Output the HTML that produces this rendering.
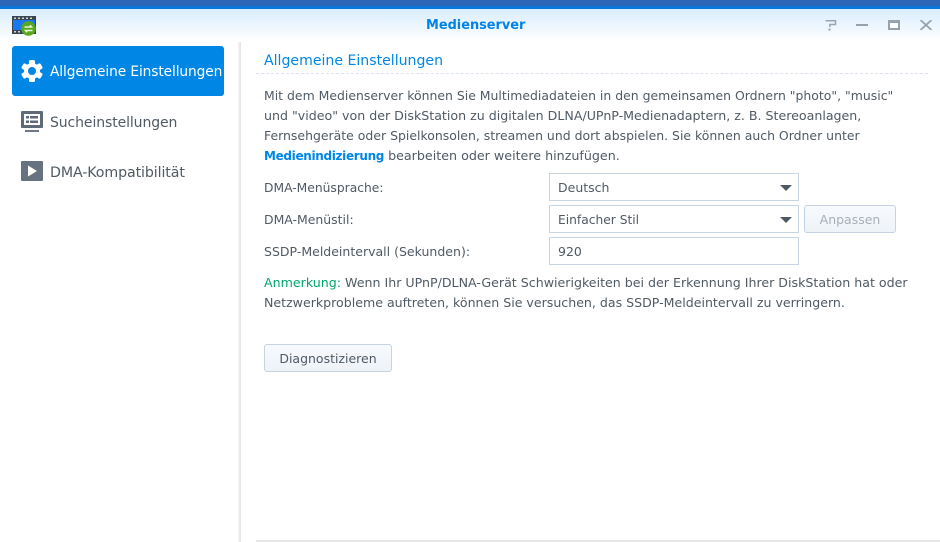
<!DOCTYPE html>
<html><head><meta charset="utf-8">
<style>
html,body{margin:0;padding:0;width:940px;height:542px;overflow:hidden;background:#fff}
body{position:relative;font-family:"DejaVu Sans","Liberation Sans",sans-serif;font-size:12.5px;color:#505a64}
.a{position:absolute;white-space:nowrap}
.t{line-height:20px;height:20px}
.box{position:absolute;box-sizing:border-box;background:#fff;border:1px solid #c7d4e2;height:28px;width:250px;left:549px}
.box span{position:absolute;left:8px;top:4px;line-height:20px;white-space:nowrap}
.arrow{position:absolute;left:230px;top:11px;width:0;height:0;border-left:6px solid transparent;border-right:6px solid transparent;border-top:6px solid #4f5965}
.btn{position:absolute;box-sizing:border-box;border:1px solid #c5d3e2;border-radius:3px;background:linear-gradient(#f7fafd,#eef3f8);text-align:center;line-height:28px;height:28px}
</style></head><body>
<div class="a" style="left:0;top:0;width:940px;height:6px;background:#2d68b8"></div>
<div class="a" style="left:0;top:6px;width:940px;height:3px;background:#0a78dc"></div>
<div class="a" style="left:0;top:9px;width:940px;height:33px;background:linear-gradient(#d9edfd,#ffffff)"></div>
<div class="a" style="left:426px;top:16px;line-height:20px;font-weight:bold;font-size:12.9px;color:#0083e6;">Medienserver</div>

<svg class="a" style="left:12px;top:16px" width="25" height="20" viewBox="0 0 25 20">
<rect x="0" y="0" width="24" height="18" fill="#3c4650"/>
<rect x="1" y="4" width="22" height="10" fill="#1a78f0"/>
<g fill="#cfd6dc"><rect x="2" y="1.500" width="2" height="1.500"/><rect x="6" y="1.500" width="2" height="1.500"/><rect x="10" y="1.500" width="2" height="1.500"/><rect x="14" y="1.500" width="2" height="1.500"/><rect x="18" y="1.500" width="2" height="1.500"/><rect x="2" y="15" width="2" height="1.500"/><rect x="6" y="15" width="2" height="1.500"/></g>
<circle cx="16.500" cy="12.500" r="7.300" fill="#5aa81e"/>
<path d="M12.500 11h7l-1.500-1.800M20.500 14.500h-7l1.500 1.800" fill="none" stroke="#e6f5d8" stroke-width="1.500"/>
</svg>

<svg class="a" style="left:825px;top:20px" width="12" height="11" viewBox="0 0 12 11"><path d="M0.500 0.800H10.500V4.500H4.800V7" fill="none" stroke="#9aa4ae" stroke-width="1.500"/><rect x="3.500" y="8.500" width="2" height="2" fill="#9aa4ae"/></svg>
<div class="a" style="left:856px;top:24px;width:12px;height:2px;background:#98a2ac"></div>
<div class="a" style="left:888px;top:20px;box-sizing:border-box;width:12px;height:10px;border:2px solid #98a2ac;border-top-width:3px;background:#fff"></div>
<svg class="a" style="left:920px;top:20px" width="12" height="10" viewBox="0 0 12 10"><path d="M0.500 0L11.500 10M11.500 0L0.500 10" stroke="#98a2ac" stroke-width="1.800"/></svg>

<div class="a" style="left:12px;top:46px;width:212px;height:50px;background:#0086e5;border-radius:3px"></div>
<svg class="a" style="left:21px;top:60px" width="22" height="22" viewBox="0 0 22 22">
<circle cx="11" cy="11" r="8" fill="#fff"/>
<g fill="#fff"><rect x="8" y="0" width="6" height="22" rx="1.500"/><rect x="8" y="0" width="6" height="22" rx="1.500" transform="rotate(60 11 11)"/><rect x="8" y="0" width="6" height="22" rx="1.500" transform="rotate(120 11 11)"/></g>
<circle cx="11" cy="11" r="4" fill="#0086e5"/>
</svg>
<div class="a t" style="left:50px;top:62px;color:#fff;font-size:13.75px;letter-spacing:-.1px">Allgemeine Einstellungen</div>

<svg class="a" style="left:21px;top:111px" width="22" height="22" viewBox="0 0 22 22">
<rect x="0" y="0" width="22" height="17" rx="1" fill="#5f6b78"/><rect x="3" y="3" width="16" height="11" fill="#fff"/>
<g fill="#5f6b78"><rect x="5" y="5" width="3" height="2.500"/><rect x="9" y="5" width="8" height="2.500"/><rect x="5" y="9.500" width="3" height="2.500"/><rect x="9" y="9.500" width="8" height="2.500"/></g>
<rect x="4" y="19" width="14" height="2" fill="#6d7884"/>
</svg>
<div class="a t" style="left:50px;top:113px;font-size:14px;letter-spacing:-.1px">Sucheinstellungen</div>

<svg class="a" style="left:21px;top:161px" width="22" height="20" viewBox="0 0 22 20">
<rect x="0" y="0" width="22" height="20" rx="1" fill="#667280"/><path d="M7 4.500L16 10L7 15.500Z" fill="#fff"/>
</svg>
<div class="a t" style="left:50px;top:163px;font-size:14.200px;letter-spacing:-.1px">DMA-Kompatibilität</div>

<div class="a" style="left:238px;top:42px;width:3px;height:500px;background:linear-gradient(90deg,#f6f6f6,#e4e4e4)"></div>

<div class="a t" style="left:264px;top:51px;color:#0086e5;font-size:14.100px;">Allgemeine Einstellungen</div>
<div class="a" style="left:256px;top:73px;width:672px;border-top:1px dashed #dce5ee"></div>

<div class="a t" style="left:264px;top:86px;font-size:12.44px">Mit dem Medienserver können Sie Multimediadateien in den gemeinsamen Ordnern "photo", "music"</div>
<div class="a t" style="left:264px;top:106px;font-size:12.62px">und "video" von der DiskStation zu digitalen DLNA/UPnP-Medienadaptern, z. B. Stereoanlagen,</div>
<div class="a t" style="left:264px;top:126px;font-size:12.46px">Fernsehgeräte oder Spielkonsolen, streamen und dort abspielen. Sie können auch Ordner unter</div>
<div class="a t" style="left:264px;top:146px;font-size:12.68px"><b style="color:#0086e5;font-size:12px;letter-spacing:-.33px">Medienindizierung</b> bearbeiten oder weitere hinzufügen.</div>

<div class="a t" style="left:264px;top:178px;font-size:12.3px">DMA-Menüsprache:</div>
<div class="box" style="top:173px"><span>Deutsch</span><i class="arrow"></i></div>
<div class="a t" style="left:264px;top:210px;font-size:12.45px">DMA-Menüstil:</div>
<div class="box" style="top:205px"><span style="font-size:12.25px">Einfacher Stil</span><i class="arrow"></i></div>
<div class="btn" style="left:804px;top:205px;width:92px;color:#a5afb9">Anpassen</div>
<div class="a t" style="left:264px;top:242px;font-size:12.52px">SSDP-Meldeintervall (Sekunden):</div>
<div class="box" style="top:237px"><span>920</span></div>

<div class="a t" style="left:264px;top:273px;font-size:12.62px"><span style="color:#00a66c">Anmerkung:</span> Wenn Ihr UPnP/DLNA-Gerät Schwierigkeiten bei der Erkennung Ihrer DiskStation hat oder</div>
<div class="a t" style="left:264px;top:293px;font-size:12.59px">Netzwerkprobleme auftreten, können Sie versuchen, das SSDP-Meldeintervall zu verringern.</div>

<div class="btn" style="left:264px;top:344px;width:128px">Diagnostizieren</div>

<div class="a" style="left:256px;top:540px;width:684px;height:2px;background:#e6e6e6"></div>
</body></html>
